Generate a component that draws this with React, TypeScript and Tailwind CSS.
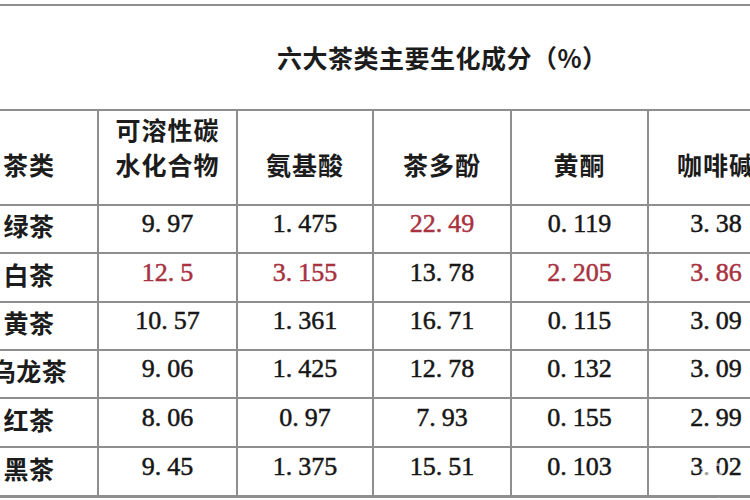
const cols = ["可溶性碳\n水化合物", "氨基酸", "茶多酚", "黄酮", "咖啡碱"];

type Cell = { v: string; red?: boolean };

const rows: { name: string; h: string; cells: Cell[] }[] = [
  { name: "绿茶", h: "h-[48px]", cells: [{ v: "9.97" }, { v: "1.475" }, { v: "22.49", red: true }, { v: "0.119" }, { v: "3.38" }] },
  { name: "白茶", h: "h-[49px]", cells: [{ v: "12.5", red: true }, { v: "3.155", red: true }, { v: "13.78" }, { v: "2.205", red: true }, { v: "3.86", red: true }] },
  { name: "黄茶", h: "h-[48px]", cells: [{ v: "10.57" }, { v: "1.361" }, { v: "16.71" }, { v: "0.115" }, { v: "3.09" }] },
  { name: "乌龙茶", h: "h-[48px]", cells: [{ v: "9.06" }, { v: "1.425" }, { v: "12.78" }, { v: "0.132" }, { v: "3.09" }] },
  { name: "红茶", h: "h-[49px]", cells: [{ v: "8.06" }, { v: "0.97" }, { v: "7.93" }, { v: "0.155" }, { v: "2.99" }] },
  { name: "黑茶", h: "h-[50px]", cells: [{ v: "9.45" }, { v: "1.375" }, { v: "15.51" }, { v: "0.103" }, { v: "3.02" }] },
];

const cjk = { fontFamily: '"Noto Sans CJK SC", "Noto Sans", sans-serif' };
const serif = { fontFamily: '"Liberation Serif", "DejaVu Serif", serif' };

// the source table prints a wide gap after the decimal point
const Num = ({ v }: { v: string }) => {
  const [a, b] = v.split(".");
  return (
    <span>
      {a}.<span className="inline-block w-[6px]"></span>
      {b}
    </span>
  );
};

export default function App() {
  return (
    <div className="relative w-[750px] h-[500px] overflow-hidden bg-white">
      <div className="mt-[4px] border-t-2 border-[#8e8e8e]">
        {/* Title */}
        <div className="h-[103px] flex items-center pl-[277px]">
          <h1 className="text-[25px] font-bold text-[#1c1c1c] tracking-[0.5px]" style={cjk}>
            六大茶类主要生化成分（%）
          </h1>
        </div>

        {/* Table */}
        <div className="-ml-[39px] w-[824px] border-t-2 border-[#8e8e8e] grid grid-cols-[138px_139px_136px_138px_137px_136px]">
          <div className="h-[95px] border-r-2 border-b-2 border-[#8e8e8e] flex items-end justify-center pb-[22px]">
            <span className="text-[25px] leading-[35px] font-bold tracking-[1px] text-[#1c1c1c]" style={cjk}>
              茶类
            </span>
          </div>
          {cols.map((c) => (
            <div
              key={c}
              className="h-[95px] border-r-2 border-b-2 border-[#8e8e8e] flex items-end justify-center pb-[22px]"
            >
              <span
                className="text-[25px] leading-[35px] font-bold tracking-[1px] text-[#1c1c1c] text-center whitespace-pre-line"
                style={cjk}
              >
                {c}
              </span>
            </div>
          ))}

          {rows.map((r, ri) => (
            <div key={r.name} className="contents">
              <div
                className={`${r.h} border-r-2 ${ri === rows.length - 1 ? "border-b-[3px]" : "border-b-2"} border-[#8e8e8e] flex items-center justify-center pb-[6px]`}
              >
                <span className="text-[25px] font-semibold tracking-[0.5px] text-[#1c1c1c]" style={cjk}>
                  {r.name}
                </span>
              </div>
              {r.cells.map((c, ci) => (
                <div
                  key={ci}
                  className={`${r.h} border-r-2 ${ri === rows.length - 1 ? "border-b-[3px]" : "border-b-2"} border-[#8e8e8e] flex items-center justify-center pb-[10px]`}
                >
                  <span
                    className={`text-[26px] leading-none [-webkit-text-stroke:0.5px] ${c.red ? "text-[#a8323f]" : "text-[#161616]"}`}
                    style={serif}
                  >
                    <Num v={c.v} />
                  </span>
                </div>
              ))}
            </div>
          ))}
        </div>
      </div>

      {/* watermark */}
      <span
        className="absolute left-[700px] top-[454px] text-[24px] font-bold text-white/60 tracking-[2px]"
        style={cjk}
      >
        知乎
      </span>
    </div>
  );
}
